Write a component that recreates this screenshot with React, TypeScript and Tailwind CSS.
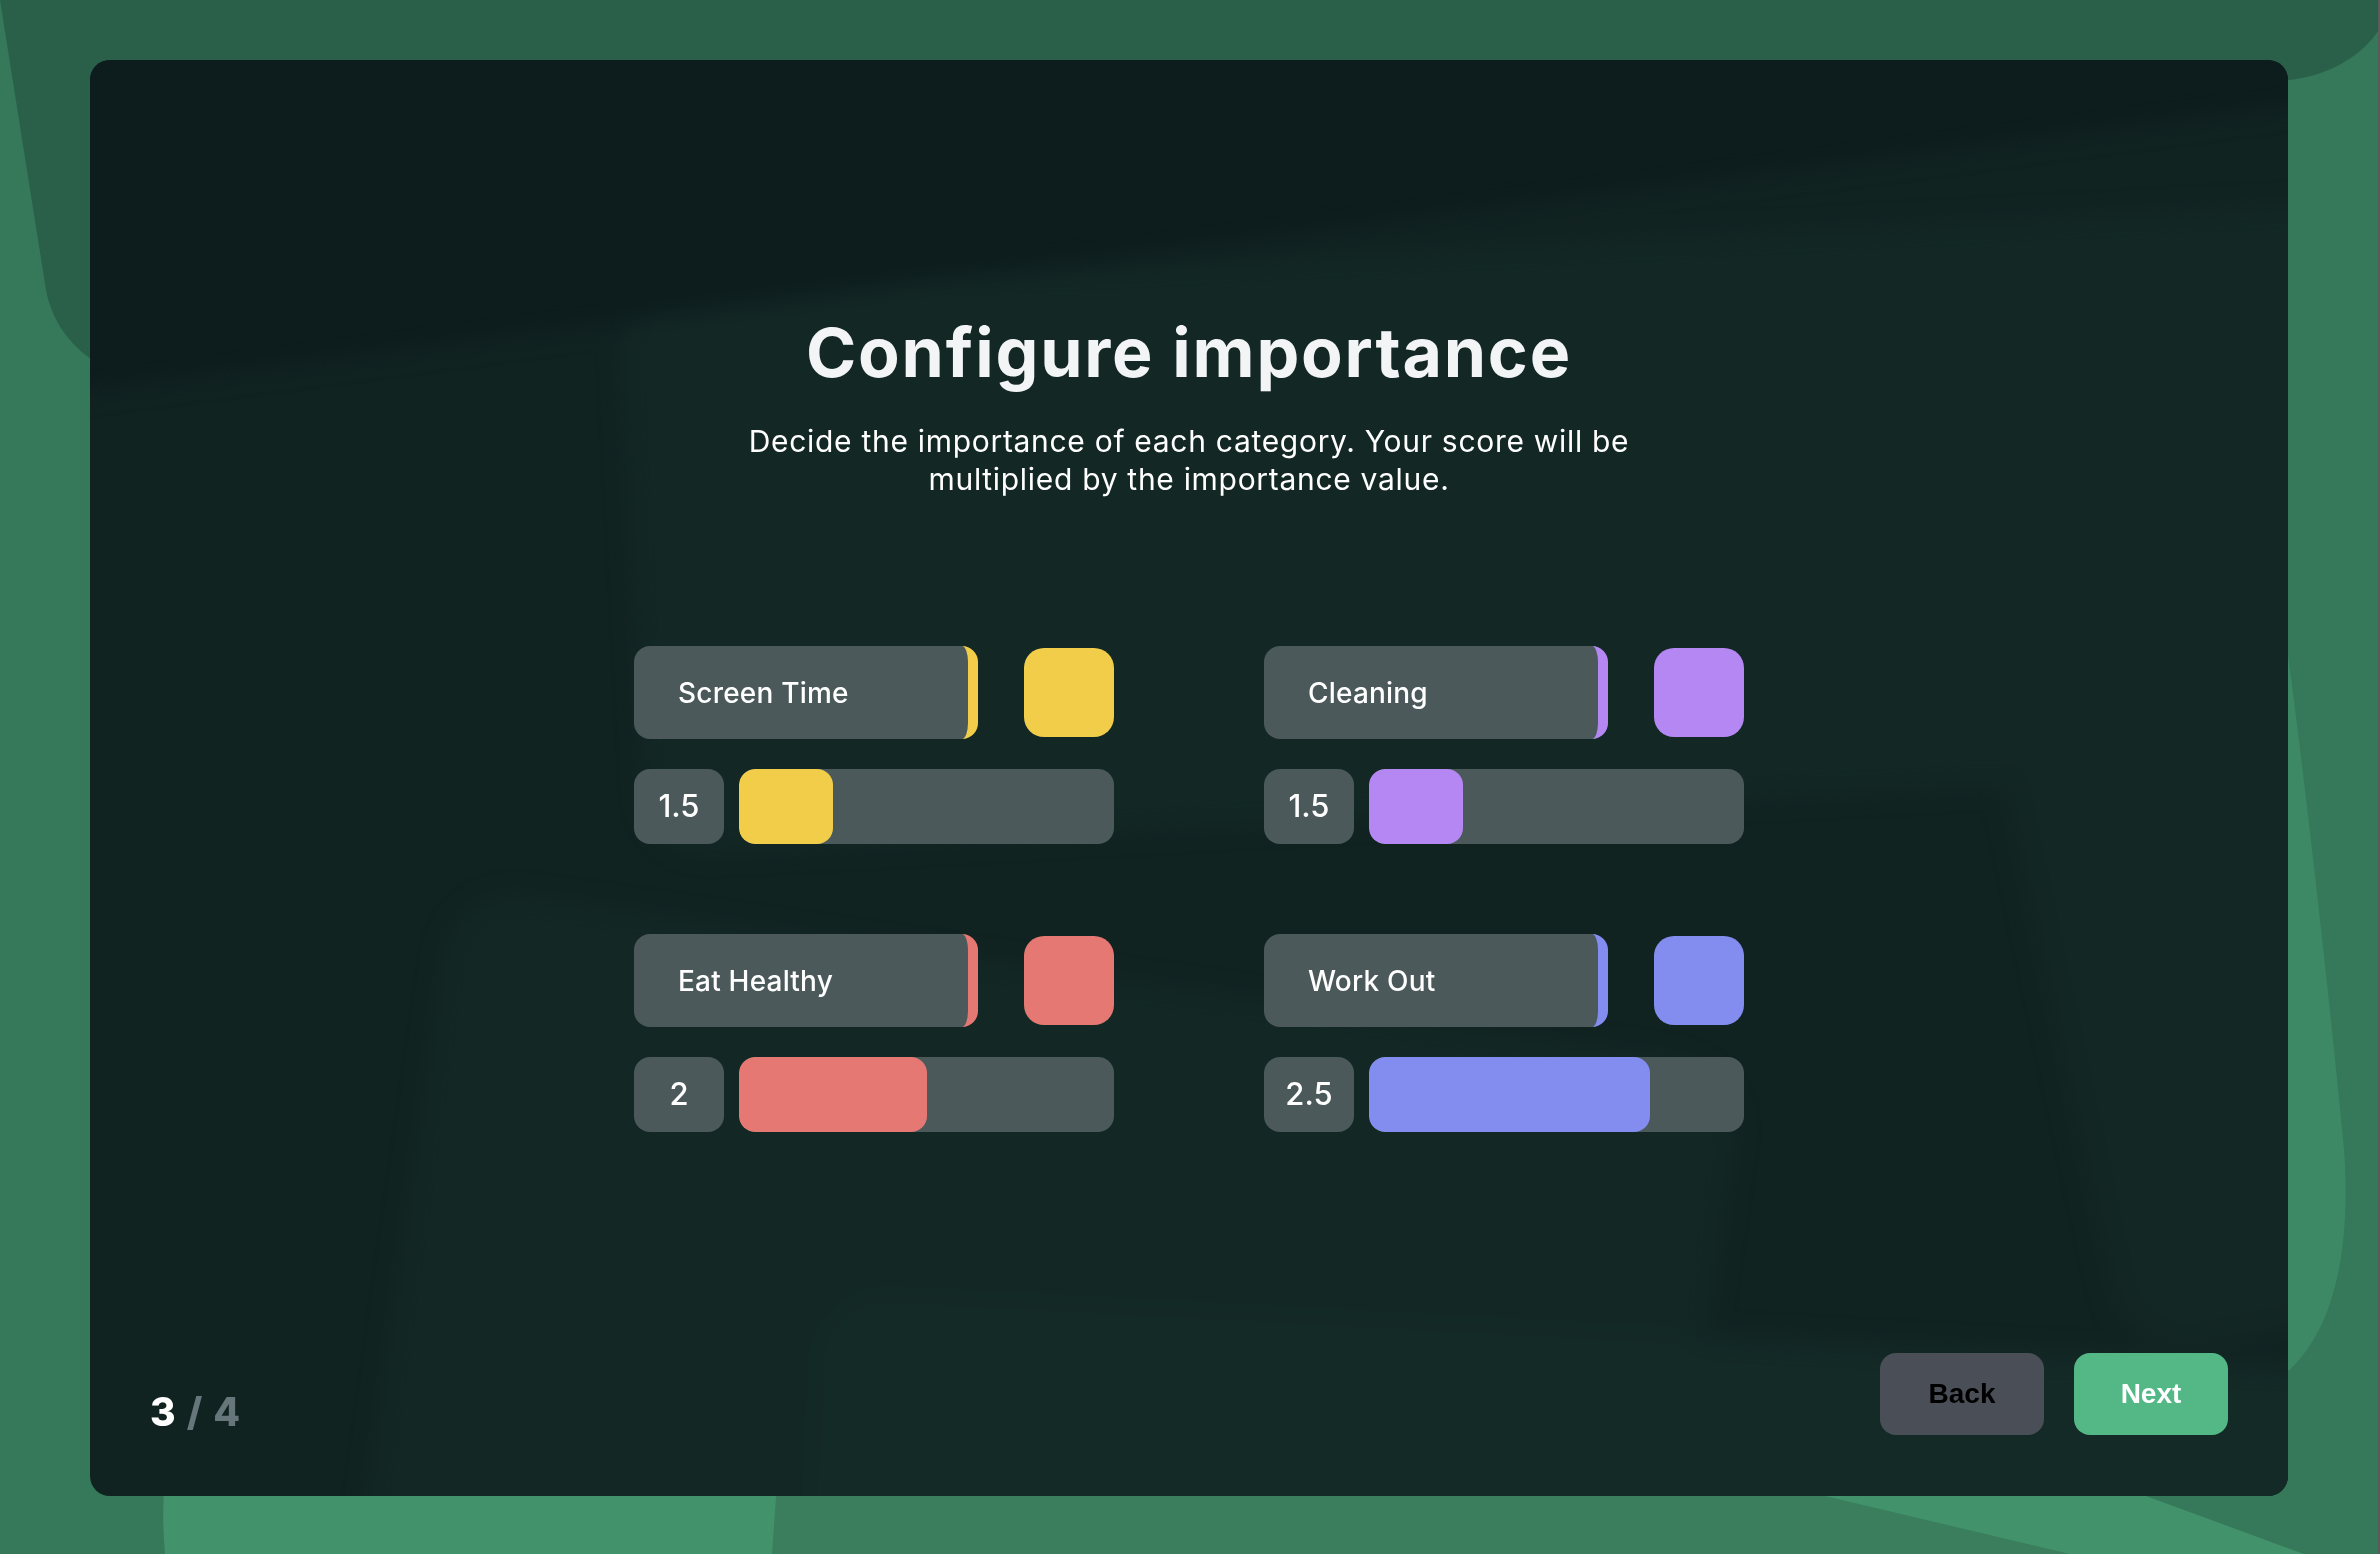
import React from "react";

type Category = {
  name: string;
  value: number;
  color: string;
};

const categories: Category[] = [
  { name: "Screen Time", value: 1.5, color: "#f2cd4a" },
  { name: "Cleaning", value: 1.5, color: "#b587f3" },
  { name: "Eat Healthy", value: 2, color: "#e67873" },
  { name: "Work Out", value: 2.5, color: "#838cef" },
];

const MIN = 1;
const MAX = 3;

function PageBackground() {
  return (
    <svg
      className="absolute inset-0 w-full h-full"
      viewBox="0 0 2380 1554"
      preserveAspectRatio="none"
    >
      <rect width="2380" height="1554" fill="#36785a" />
      {/* top dark blob */}
      <path
        d="M0,0 H2380 V28 C2362,58 2325,76 2290,80 L190,380 C118,390 58,352 46,290 Z"
        fill="#2a6049"
      />
      {/* lower middle band */}
      <path d="M780,1300 L1830,1300 L2070,1554 L770,1554 Z" fill="#3a7e5d" />
      {/* bottom-left light blob */}
      <path
        d="M200,1300 L790,1300 L772,1554 L165,1554 C160,1500 166,1440 178,1390 Z"
        fill="#42936b"
      />
      {/* bottom-right light band */}
      <path d="M1825,1496 L2146,1496 L2304,1554 L2070,1554 Z" fill="#42936b" />
      {/* right light blob */}
      <path
        d="M2280,600 C2296,700 2330,1000 2344,1150 C2352,1260 2330,1340 2280,1378 Z"
        fill="#3e8965"
      />
      <rect x="2378" y="0" width="2" height="1554" fill="#5b5b5b" />
    </svg>
  );
}

function CardBackground() {
  return (
    <svg
      className="absolute inset-0 w-full h-full"
      viewBox="0 0 2198 1436"
      preserveAspectRatio="none"
    >
      <defs>
        <filter
          id="soft"
          x="-10%"
          y="-10%"
          width="120%"
          height="120%"
          colorInterpolationFilters="sRGB"
        >
          <feGaussianBlur stdDeviation="12" />
        </filter>
      </defs>
      <rect width="2198" height="1436" fill="#112321" />
      <g filter="url(#soft)">
        <rect x="530" y="235" width="1900" height="560" rx="60" fill="#132825" transform="rotate(-3 530 235)" />
        <rect x="365" y="828" width="1300" height="900" rx="70" fill="#132825" transform="rotate(8 365 828)" />
        <rect x="730" y="1230" width="1600" height="600" rx="70" fill="#142a27" transform="rotate(3 730 1230)" />
        <rect x="1880" y="560" width="420" height="760" rx="80" fill="#132724" transform="rotate(-12 1880 560)" />
        <path d="M-40,-40 H2240 V40 L-40,335 Z" fill="#0d1c1d" />
      </g>
    </svg>
  );
}

function CategoryRow({ item }: { item: Category }) {
  const pct = ((item.value - MIN) / (MAX - MIN)) * 100;
  return (
    <div className="flex flex-col gap-[30px]">
      <div className="flex items-center justify-between">
        <div
          className="w-[344px] h-[93px] rounded-[16px] bg-[#4b595a] border-r-[10px] flex items-center pl-[44px] text-white text-[28px] font-medium tracking-[0.2px]"
          style={{ borderRightColor: item.color }}
        >
          {item.name}
        </div>
        <div
          className="w-[90px] h-[89px] rounded-[20px]"
          style={{ backgroundColor: item.color }}
        />
      </div>
      <div className="flex gap-[15px]">
        <div className="w-[90px] h-[75px] rounded-[16px] bg-[#4b595a] flex items-center justify-center text-white text-[31px] font-medium">
          {item.value}
        </div>
        <div className="flex-1 h-[75px] rounded-[16px] bg-[#4b595a] overflow-hidden">
          <div
            className="h-full rounded-[16px]"
            style={{ width: `${pct}%`, backgroundColor: item.color }}
          />
        </div>
      </div>
    </div>
  );
}

export default function App() {
  return (
    <div
      className="relative w-[2380px] h-[1554px] overflow-hidden pt-[60px] pl-[90px]"
      style={{ fontFamily: "Inter, 'Noto Sans', sans-serif" }}
    >
      <PageBackground />
      <div className="relative w-[2198px] h-[1436px] rounded-[20px] overflow-hidden">
        <CardBackground />
        <div className="relative flex flex-col h-full px-[60px] pb-[61px]">
          {/* Header */}
          <div className="mt-[258px] text-center">
            <h1 className="text-[68px] leading-none font-bold text-[#f3f4f6] tracking-[1.8px]">
              Configure importance
            </h1>
            <p className="mt-[36px] text-[30px] leading-[38px] text-white tracking-[0.7px]">
              Decide the importance of each category. Your score will be
              <br />
              multiplied by the importance value.
            </p>
          </div>

          {/* Categories */}
          <div className="mt-[148px] mx-auto w-[1110px] grid grid-cols-2 gap-x-[150px] gap-y-[90px]">
            {categories.map((c) => (
              <CategoryRow key={c.name} item={c} />
            ))}
          </div>

          {/* Footer */}
          <div className="mt-auto flex items-end justify-between">
            <div className="mb-[4px] text-[39px] leading-none font-extrabold">
              <span className="text-white">3</span>
              <span className="text-[#66767a] mx-[11px]">/</span>
              <span className="text-[#66767a]">4</span>
            </div>
            <div className="flex gap-[30px]" style={{ fontFamily: "'Liberation Sans', Arial, sans-serif" }}>
              <button className="w-[164px] h-[82px] rounded-[16px] bg-[#4a4f57] text-black text-[28px] font-bold">
                Back
              </button>
              <button className="w-[154px] h-[82px] rounded-[16px] bg-[#54b886] text-white text-[28px] font-bold">
                Next
              </button>
            </div>
          </div>
        </div>
      </div>
    </div>
  );
}
